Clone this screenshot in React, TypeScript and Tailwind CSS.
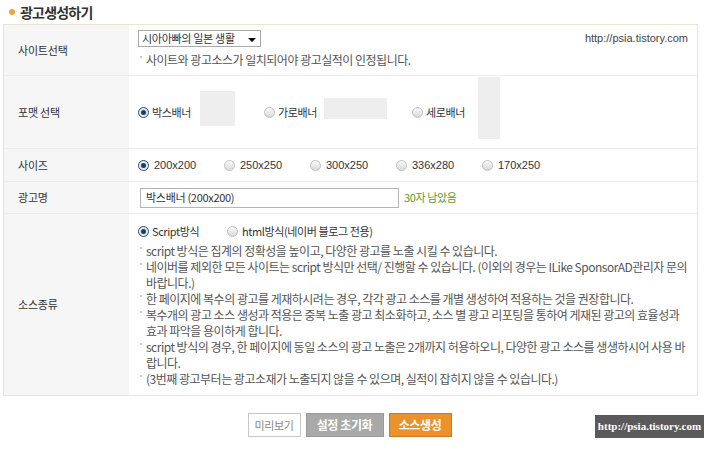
import React from 'react';

const KR = "font-['Noto_Sans_CJK_KR',sans-serif]";

// Small gradient radio, blue when checked
const Radio = ({ on }: { on?: boolean }) =>
  on ? (
    <span className="inline-flex items-center justify-center w-[11px] h-[11px] rounded-full border border-[#2d4f73] bg-[#dfe9f3] shrink-0">
      <span className="w-[5px] h-[5px] rounded-full bg-[#1d3c5e]" />
    </span>
  ) : (
    <span className="inline-block w-[11px] h-[11px] rounded-full border border-[#c0c0c0] bg-gradient-to-b from-[#fafafa] to-[#d9d9d9] shrink-0" />
  );

const Row = ({ label, h, children, last }: { label: string; h: string; children: React.ReactNode; last?: boolean }) => (
  <div className={`flex ${h} ${last ? '' : 'border-b border-[#ececec]'}`}>
    <div className="w-[125px] shrink-0 bg-[#f6f6f6] flex items-center pl-[14px] text-[11px] tracking-[-0.2px] text-[#333]">{label}</div>
    <div className="flex-1 min-w-0">{children}</div>
  </div>
);

const Note = ({ children }: { children: React.ReactNode }) => (
  <div className="flex text-[12px] leading-[16px] text-[#555] tracking-[-0.5px]">
    <span className="w-[6px] shrink-0 pt-[4px]">
      <span className="block w-[2px] h-[2px] bg-[#c8c8c8]" />
    </span>
    <span>{children}</span>
  </div>
);

const notes = [
  'script 방식은 집계의 정확성을 높이고, 다양한 광고를 노출 시킬 수 있습니다.',
  '네이버를 제외한 모든 사이트는 script 방식만 선택/ 진행할 수 있습니다. (이외의 경우는 ILike SponsorAD관리자 문의 바랍니다.)',
  '한 페이지에 복수의 광고를 게재하시려는 경우, 각각 광고 소스를 개별 생성하여 적용하는 것을 권장합니다.',
  '복수개의 광고 소스 생성과 적용은 중복 노출 광고 최소화하고, 소스 별 광고 리포팅을 통하여 게재된 광고의 효율성과 효과 파악을 용이하게 합니다.',
  'script 방식의 경우, 한 페이지에 동일 소스의 광고 노출은 2개까지 허용하오니, 다양한 광고 소스를 생생하시어 사용 바랍니다.',
  '(3번째 광고부터는 광고소재가 노출되지 않을 수 있으며, 실적이 잡히지 않을 수 있습니다.)',
];

const sizes = ['200x200', '250x250', '300x250', '336x280', '170x250'];

export default function App() {
  return (
    <div className={`w-[720px] h-[450px] bg-white relative ${KR}`}>
      {/* Title */}
      <div className="flex items-center h-[22px] pl-[9px] pt-[2px]">
        <span className="w-[6px] h-[6px] rounded-full bg-[#f0a040] mr-[5px]" />
        <span className="text-[14px] font-bold text-[#333] tracking-[-0.8px]">광고생성하기</span>
      </div>

      {/* Form table */}
      <div className="ml-[3px] mt-[2px] w-[695px] border border-[#ebe4d4]">
        <Row label="사이트선택" h="h-[51px]">
          <div className="flex flex-col pl-[9px] pt-[5px] pr-[9px]">
            <div className="flex items-center justify-between">
              <div className="h-[17px] w-[123px] border border-[#a9a9a9] flex items-center justify-between pl-[3px] pr-[4px] text-[11px] tracking-[-0.3px] text-[#333] whitespace-nowrap">
                <span>시아아빠의 일본 생활</span>
                <span className="w-0 h-0 border-l-[4px] border-r-[4px] border-t-[4px] border-l-transparent border-r-transparent border-t-black mt-[2px]" />
              </div>
              <span className="text-[11px] text-[#444] font-['Liberation_Sans',sans-serif]">http://psia.tistory.com</span>
            </div>
            <div className="mt-[5px] pl-[2px]">
              <Note>사이트와 광고소스가 일치되어야 광고실적이 인정됩니다.</Note>
            </div>
          </div>
        </Row>

        <Row label="포맷 선택" h="h-[73px]">
          <div className="flex h-full pl-[9px] text-[11px] tracking-[-0.4px] text-[#333]">
            <div className="flex items-center gap-[3px] w-[126px]">
              <Radio on />
              <span>박스배너</span>
              <span className="w-[35px] h-[35px] bg-[#eee] ml-[6px] mt-[-8px]" />
            </div>
            <div className="flex items-center gap-[3px] w-[148px]">
              <Radio />
              <span>가로배너</span>
              <span className="w-[63px] h-[21px] bg-[#eee] ml-[4px] mt-[-8px]" />
            </div>
            <div className="flex items-center gap-[3px]">
              <Radio />
              <span>세로배너</span>
              <span className="w-[22px] h-[62px] bg-[#eee] ml-[10px] mt-[-8px]" />
            </div>
          </div>
        </Row>

        <Row label="사이즈" h="h-[33px]">
          <div className="flex items-center h-full pl-[9px] text-[11px] text-[#333] font-['Liberation_Sans',sans-serif]">
            {sizes.map((s) => (
              <div key={s} className="flex items-center gap-[5px] w-[86px]">
                <Radio on={s === '200x200'} />
                <span>{s}</span>
              </div>
            ))}
          </div>
        </Row>

        <Row label="광고명" h="h-[32px]">
          <div className="flex items-center h-full pl-[11px]">
            <div className="w-[259px] h-[20px] border border-[#b5b5b5] flex items-center pl-[5px] text-[11px] tracking-[-0.3px] text-[#333]">
              박스배너 (200x200)
            </div>
            <span className="ml-[5px] text-[11px] tracking-[-0.4px] text-[#5f9a1e]">30자 남았음</span>
          </div>
        </Row>

        <Row label="소스종류" h="h-[181px]" last>
          <div className="flex flex-col pl-[9px] pr-[8px] pt-[9px]">
            <div className="flex items-center text-[11px] tracking-[-0.4px] text-[#333] h-[16px]">
              <div className="flex items-center gap-[3px] w-[89px]">
                <Radio on />
                <span>Script방식</span>
              </div>
              <div className="flex items-center gap-[4px]">
                <Radio />
                <span>html방식(네이버 블로그 전용)</span>
              </div>
            </div>
            <div className="mt-[4px] pl-[2px]">
              {notes.map((n) => (
                <Note key={n}>{n}</Note>
              ))}
            </div>
          </div>
        </Row>
      </div>

      {/* Buttons */}
      <div className="flex justify-center gap-[5px] mt-[17px] pr-[21px]">
        <button className="h-[24px] w-[53px] border border-[#c8c8c8] bg-white text-[11px] tracking-[-0.4px] text-[#888]">미리보기</button>
        <button className="h-[24px] w-[78px] border border-[#999] bg-[#a9a9a9] text-[12px] tracking-[-0.4px] font-bold text-white">설정 초기화</button>
        <button className="h-[24px] w-[63px] border border-[#d07a18] bg-[#ea922c] text-[12px] tracking-[-0.4px] font-bold text-white">소스생성</button>
      </div>

      {/* Watermark */}
      <div className="absolute left-[595px] top-[415px] w-[109px] h-[23px] bg-[#5a5a5a] flex items-center justify-center text-[11px] font-bold text-white font-['Liberation_Serif',serif]">
        http://psia.tistory.com
      </div>
    </div>
  );
}
